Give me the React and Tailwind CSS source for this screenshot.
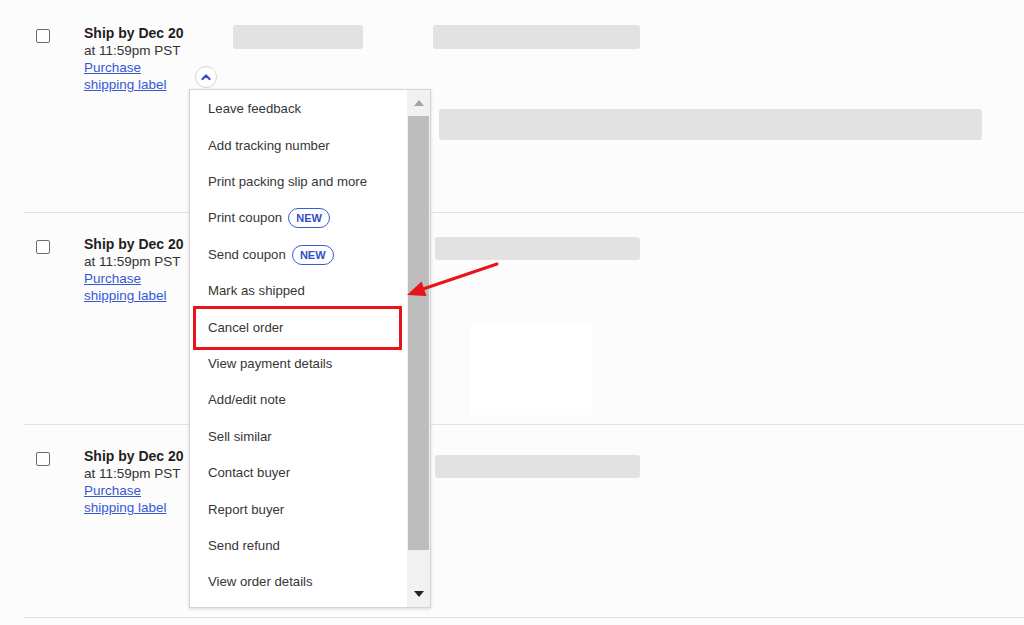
import React from "react";

const items = [
  "Leave feedback",
  "Add tracking number",
  "Print packing slip and more",
  "Print coupon",
  "Send coupon",
  "Mark as shipped",
  "Cancel order",
  "View payment details",
  "Add/edit note",
  "Sell similar",
  "Contact buyer",
  "Report buyer",
  "Send refund",
  "View order details",
];

function NewBadge() {
  return (
    <span className="ml-[6px] inline-flex h-[20px] w-[42px] items-center justify-center rounded-full border-[1.5px] border-[#3b5bd6] text-[11px] font-bold text-[#2f4fc9]">
      NEW
    </span>
  );
}

function ShipInfo() {
  return (
    <div className="ml-[34px] w-[149px] text-[13.5px] leading-[17px] text-[#333]">
      <div className="text-[14px] font-bold text-[#1f1f1f]">Ship by Dec 20</div>
      <div>at 11:59pm PST</div>
      <div className="text-[#3559d6] underline">Purchase</div>
      <div className="text-[#3559d6] underline">shipping label</div>
    </div>
  );
}

function Checkbox() {
  return <div className="mt-[4px] h-[14px] w-[14px] shrink-0 rounded-[2px] border-[1.5px] border-[#6b6b6b] bg-white" />;
}

export default function App() {
  return (
    <div
      className="relative h-[625px] w-[1024px] overflow-hidden bg-[#fcfcfc]"
      style={{ fontFamily: '"Liberation Sans", Arial, sans-serif' }}
    >
      {/* Row 1 */}
      <div className="ml-[24px] h-[213px] border-b border-[#e2e2e2]">
        <div className="flex items-start pl-[12px] pt-[25px]">
          <Checkbox />
          <ShipInfo />
          <div className="h-[24px] w-[130px] rounded-[3px] bg-[#e2e2e2]" />
          <div className="ml-[70px] flex flex-col">
            <div className="h-[24px] w-[207px] rounded-[3px] bg-[#e2e2e2]" />
            <div className="ml-[6px] mt-[60px] h-[31px] w-[543px] rounded-[3px] bg-[#e2e2e2]" />
          </div>
        </div>
      </div>

      {/* Row 2 */}
      <div className="ml-[24px] h-[212px] border-b border-[#e2e2e2]">
        <div className="flex items-start pl-[12px] pt-[23px]">
          <Checkbox />
          <ShipInfo />
          <div className="mt-[1px] h-[24px] w-[130px] rounded-[3px] bg-[#e2e2e2]" />
          <div className="ml-[72px] flex flex-col">
            <div className="mt-[1px] h-[23px] w-[205px] rounded-[3px] bg-[#e2e2e2]" />
            <div className="ml-[35px] mt-[63px] h-[92px] w-[122px] bg-white" />
          </div>
        </div>
      </div>

      {/* Row 3 */}
      <div className="ml-[24px] h-[193px] border-b border-[#e2e2e2]">
        <div className="flex items-start pl-[12px] pt-[23px]">
          <Checkbox />
          <ShipInfo />
          <div className="mt-[7px] h-[24px] w-[130px] rounded-[3px] bg-[#e2e2e2]" />
          <div className="ml-[72px] mt-[7px] h-[23px] w-[205px] rounded-[3px] bg-[#e2e2e2]" />
        </div>
      </div>

      {/* Chevron toggle button */}
      <div className="absolute left-[195px] top-[66px] flex h-[22px] w-[22px] items-center justify-center rounded-full border border-[#d6d6d6] bg-white">
        <svg width="10" height="8" viewBox="0 0 10 8">
          <path d="M1.5 6 L5 2.5 L8.5 6" fill="none" stroke="#2f4fc9" strokeWidth="2.2" strokeLinecap="round" strokeLinejoin="round" />
        </svg>
      </div>

      {/* Dropdown menu */}
      <div className="absolute left-[189px] top-[89px] flex h-[519px] w-[242px] border border-[#d4d4d4] bg-white shadow-[0_1px_3px_rgba(0,0,0,0.15)]">
        <div className="flex-1 pl-[18px] pt-[1px]">
          {items.map((it) => (
            <div key={it} className="flex h-[36.4px] items-center text-[13.2px] text-[#363636]">
              {it}
              {(it === "Print coupon" || it === "Send coupon") && <NewBadge />}
            </div>
          ))}
        </div>
        <div className="flex w-[23px] flex-col bg-[#f1f1f1]">
          <div className="flex h-[26px] items-center justify-center">
            <svg width="10" height="6" viewBox="0 0 10 6">
              <path d="M0 6 L5 0 L10 6 Z" fill="#a3a3a3" />
            </svg>
          </div>
          <div className="mx-[1px] h-[434px] bg-[#bdbdbd]" />
          <div className="flex flex-1 items-end justify-center pb-[10px]">
            <svg width="10" height="6" viewBox="0 0 10 6">
              <path d="M0 0 L10 0 L5 6 Z" fill="#222" />
            </svg>
          </div>
        </div>
      </div>

      {/* Annotation: red box */}
      <div className="absolute left-[193px] top-[306px] h-[44px] w-[209px] border-[3px] border-[#e8141b]" />

      {/* Annotation: red arrow */}
      <svg className="absolute left-[400px] top-[255px]" width="110" height="50" viewBox="400 255 110 50">
        <line x1="497" y1="264" x2="423" y2="289" stroke="#e8141b" strokeWidth="3" strokeLinecap="round" />
        <polygon points="407,295 421.5,281.5 426.5,296" fill="#e8141b" />
      </svg>
    </div>
  );
}
